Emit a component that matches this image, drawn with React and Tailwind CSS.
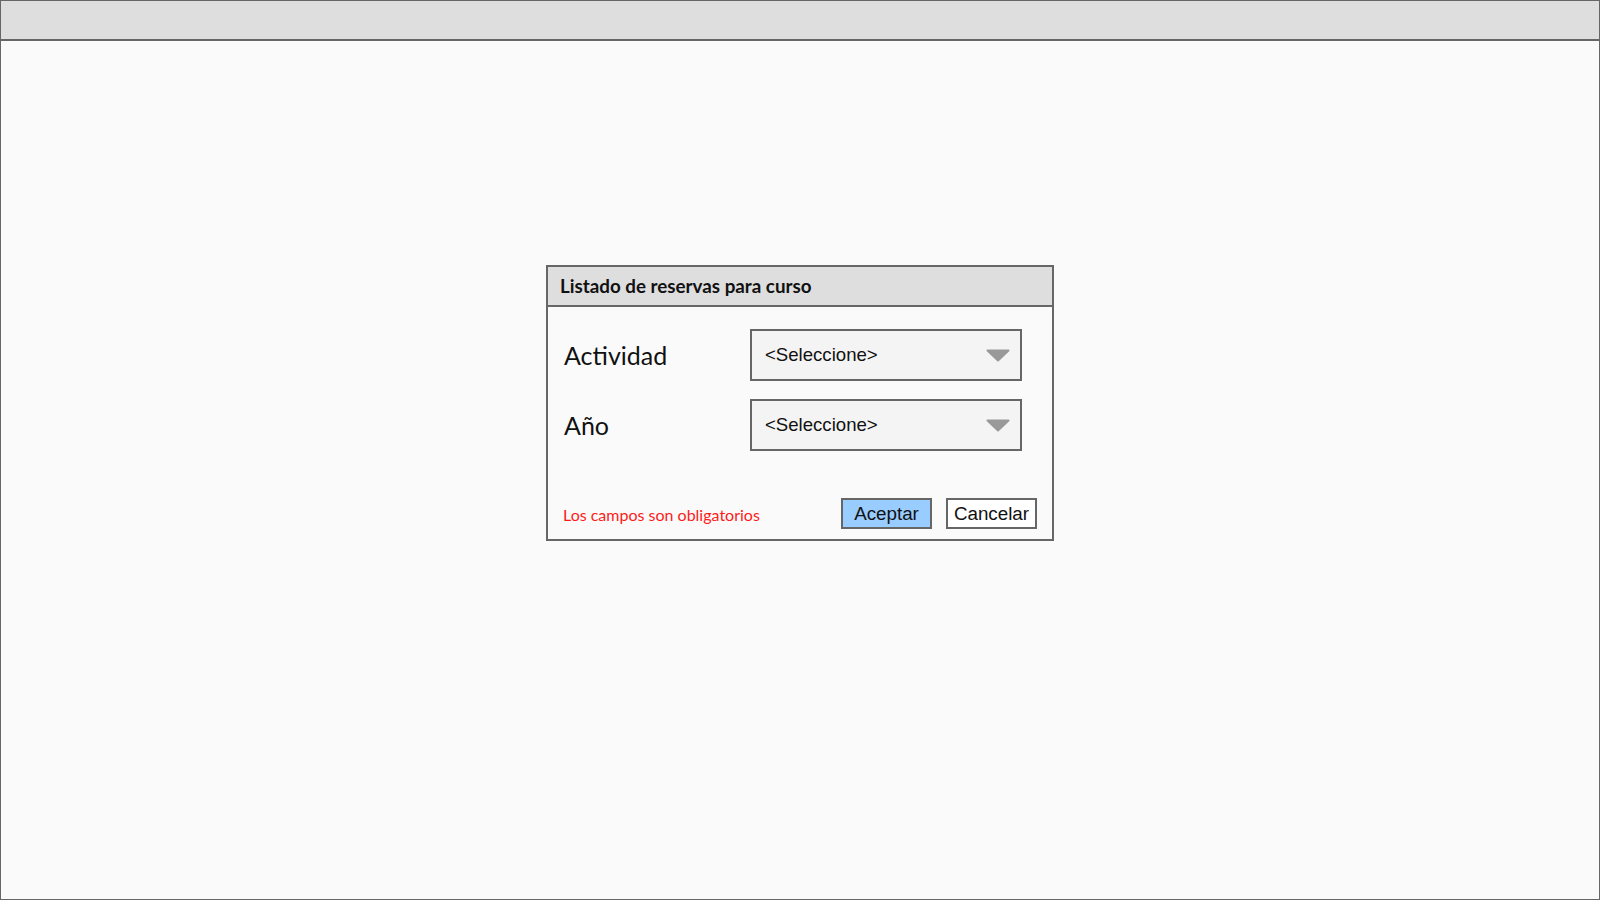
const lato = { fontFamily: 'Lato, "Open Sans", sans-serif' }

function Caret() {
    return (
        <svg width="24" height="13" viewBox="0 0 24 13" className="shrink-0">
            <polygon points="1.5,1.5 22.5,1.5 12,11.5" fill="#999999" stroke="#999999" strokeWidth="2" strokeLinejoin="round" />
        </svg>
    )
}

function SelectBox() {
    return (
        <div className="w-[272px] h-[52px] border-2 border-[#666666] bg-[#f4f4f4] flex items-center justify-between pl-[13px] pr-[10px]">
            <span className="text-[18.6px] text-[#111111] font-['Liberation_Sans',Arial,sans-serif]">&lt;Seleccione&gt;</span>
            <Caret />
        </div>
    )
}

export default function App() {
    return (
        <div className="w-full h-screen flex flex-col border border-[#666666] bg-[#fafafa]">
            {/* top bar */}
            <div className="h-[40px] shrink-0 bg-[#dedede] border-b-2 border-[#666666]" />

            {/* canvas */}
            <div className="flex-1 flex justify-center pt-[224px]">
                <div className="w-[508px] h-[276px] border-2 border-[#666666] bg-[#fafafa] flex flex-col" style={lato}>
                    <div className="h-[40px] shrink-0 bg-[#dedede] border-b-2 border-[#666666] flex items-center px-3 pt-[1px]">
                        <span className="text-[18.8px] font-bold text-[#111111]">Listado de reservas para curso</span>
                    </div>

                    <div className="flex-1 flex flex-col pt-[22px] pl-4 pr-[30px] pb-[10px]">
                        <div className="flex flex-col gap-[18px]">
                            <div className="flex items-center">
                                <span className="w-[186px] text-[25px] text-[#111111] pt-[1px]">Actividad</span>
                                <SelectBox />
                            </div>
                            <div className="flex items-center">
                                <span className="w-[186px] text-[25px] text-[#111111] pt-[1px]">Año</span>
                                <SelectBox />
                            </div>
                        </div>

                        <div className="mt-auto flex items-center justify-between -mr-[15px]">
                            <span className="text-[16px] text-[#ff1a1a] mt-[3px] -ml-[1px]">Los campos son obligatorios</span>
                            <div className="flex gap-[14px] font-['Liberation_Sans',Arial,sans-serif] text-[18.8px] text-[#111111]">
                                <button className="w-[91px] h-[31px] border-2 border-[#666666] bg-[#99ccff] flex items-center justify-center pt-[1px]">Aceptar</button>
                                <button className="w-[91px] h-[31px] border-2 border-[#666666] bg-white flex items-center justify-center pt-[1px]">Cancelar</button>
                            </div>
                        </div>
                    </div>
                </div>
            </div>
        </div>
    )
}
